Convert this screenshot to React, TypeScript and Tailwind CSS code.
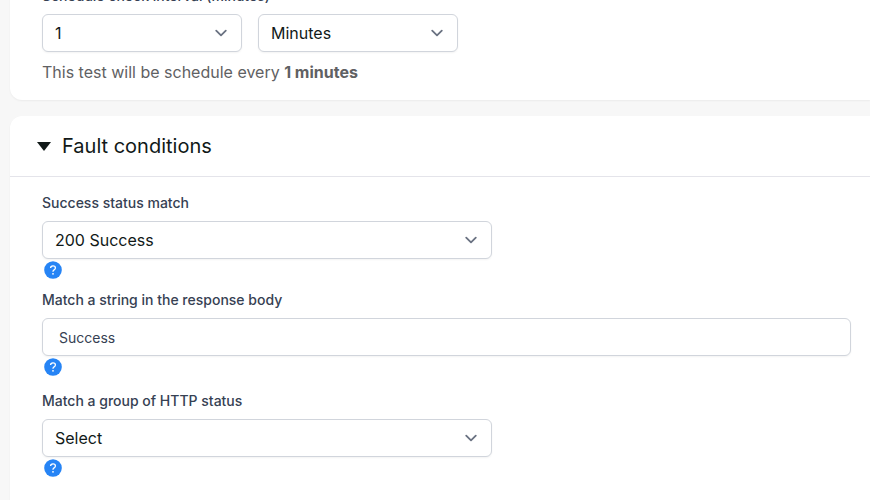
import React, { useId, useState } from "react";

function Chevron() {
  return (
    <svg
      className="pointer-events-none absolute inset-y-0 right-[9px] my-auto size-6 text-gray-500"
      viewBox="0 0 20 20"
      fill="none"
      stroke="currentColor"
      strokeWidth="1.5"
      strokeLinecap="round"
      strokeLinejoin="round"
      aria-hidden="true"
    >
      <path d="M6 8l4 4 4-4" />
    </svg>
  );
}

type SelectProps = {
  id?: string;
  label?: string;
  options: string[];
  className: string;
};

function Select({ id, label, options, className }: SelectProps) {
  return (
    <div className={`relative ${className}`}>
      <select
        id={id}
        aria-label={label}
        className="block h-[38px] w-full appearance-none rounded-md border border-gray-300 bg-white pr-10 pl-3 text-base text-[#111918] shadow-xs"
      >
        {options.map((option) => (
          <option key={option}>{option}</option>
        ))}
      </select>
      <Chevron />
    </div>
  );
}

function Label({ htmlFor, children }: { htmlFor: string; children: React.ReactNode }) {
  return (
    <label htmlFor={htmlFor} className="mb-2 block w-fit text-sm leading-5 font-medium text-gray-700">
      {children}
    </label>
  );
}

function Help() {
  return (
    <div className="flex h-[23px] pt-0.5 pl-0.5">
      <button type="button" aria-label="Help" className="size-[18px]">
        <svg viewBox="0 0 18 18" className="size-[18px]" fill="none" aria-hidden="true">
          <circle cx="9" cy="9" r="8.8" fill="#2684f5" />
          <path
            d="M6.6 7.1C6.6 5.7 7.6 4.9 9 4.9s2.4.8 2.4 2c0 1-.6 1.5-1.3 2-.7.4-1.1.8-1.1 1.6v.2"
            stroke="white"
            strokeWidth="1.3"
          />
          <circle cx="9" cy="12.8" r="0.9" fill="white" />
        </svg>
      </button>
    </div>
  );
}

export default function App() {
  const id = useId();
  const [body, setBody] = useState("Success");
  const [open, setOpen] = useState(true);

  return (
    <main className="flex min-h-screen flex-col gap-4 overflow-hidden bg-[#f7f7f7] pl-2.5 font-['Inter',sans-serif]">
      <section className="-mt-3.5 rounded-bl-xl bg-white pr-[19px] pb-4 pl-8 shadow-xs">
        <Label htmlFor={`${id}-interval`}>Schedule check interval (minutes)</Label>
        <div className="flex gap-4">
          <Select id={`${id}-interval`} options={["1", "5", "10"]} className="w-[200px]" />
          <Select label="Interval unit" options={["Minutes", "Hours"]} className="w-[200px]" />
        </div>
        <p className="mt-2 text-base leading-6 text-[#5f6163]">
          This test will be schedule every <strong className="font-bold">1 minutes</strong>
        </p>
      </section>

      <section className="grow rounded-tl-xl bg-white shadow-xs">
        <h2 className="border-b border-[#e4e4ea] py-4 pl-[27px] text-xl leading-7 text-[#111918]">
          <button
            type="button"
            aria-expanded={open}
            onClick={() => setOpen(!open)}
            className="flex items-center gap-[11px]"
          >
            <svg viewBox="0 0 14 9" className="h-[9px] w-3.5" fill="currentColor" aria-hidden="true">
              <path d="M0 0h14L7 9z" />
            </svg>
            Fault conditions
          </button>
        </h2>
        {open && (
          <div className="pt-4 pr-[19px] pl-8">
            <Label htmlFor={`${id}-status`}>Success status match</Label>
            <Select
              id={`${id}-status`}
              options={["200 Success", "201 Created"]}
              className="w-full max-w-[450px]"
            />
            <Help />
            <div className="mt-2">
              <Label htmlFor={`${id}-body`}>Match a string in the response body</Label>
              <input
                id={`${id}-body`}
                type="text"
                value={body}
                onChange={(e) => setBody(e.target.value)}
                className="block h-[38px] w-full rounded-md border border-gray-300 bg-white px-4 text-sm text-gray-700 shadow-xs"
              />
              <Help />
            </div>
            <div className="mt-3">
              <Label htmlFor={`${id}-group`}>Match a group of HTTP status</Label>
              <Select id={`${id}-group`} options={["Select"]} className="w-full max-w-[450px]" />
              <Help />
            </div>
          </div>
        )}
      </section>
    </main>
  );
}
